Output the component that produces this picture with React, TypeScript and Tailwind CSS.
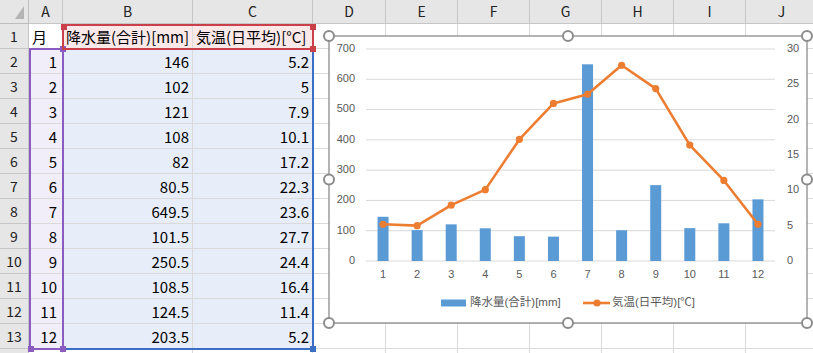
const cols = ["A", "B", "C", "D", "E", "F", "G", "H", "I", "J"];
const precip = [146, 102, 121, 108, 82, 80.5, 649.5, 101.5, 250.5, 108.5, 124.5, 203.5];
const temp = [5.2, 5, 7.9, 10.1, 17.2, 22.3, 23.6, 27.7, 24.4, 16.4, 11.4, 5.2];

const font = { fontFamily: '"Noto Sans CJK JP", "Noto Sans", sans-serif' };

const Chart = () => {
  const x0 = 37;
  const pw = 409;
  const step = pw / 12;
  const yZero = 225;
  const yTop = 13;
  const ph = yZero - yTop;
  const cx = (i: number) => x0 + step * (i + 0.5);
  const yP = (v: number) => yZero - (v * ph) / 700;
  const yT = (v: number) => yZero - (v * ph) / 30;
  const pts = temp.map((t, i) => `${cx(i)},${yT(t)}`).join(" ");
  const handles = [
    [0, 0],
    [239, 0],
    [478, 0],
    [0, 143.5],
    [478, 143.5],
    [0, 287],
    [239, 287],
    [478, 287],
  ];

  return (
    <svg
      className="absolute left-[329px] top-[36px] overflow-visible"
      width={478}
      height={287}
      style={{ fontFamily: '"Liberation Sans", "Noto Sans CJK JP", sans-serif' }}
    >
      <rect x={0} y={0} width={478} height={287} fill="#ffffff" stroke="#8c8c8c" strokeWidth={1.3} />
      {[0, 100, 200, 300, 400, 500, 600, 700].map((v) => (
        <g key={v}>
          <line x1={x0} x2={x0 + pw} y1={yP(v)} y2={yP(v)} stroke="#d9d9d9" strokeWidth={1} />
          <text x={26} y={yP(v)} fontSize={11} fill="#595959" textAnchor="end" dominantBaseline="middle">
            {v}
          </text>
        </g>
      ))}
      {[0, 5, 10, 15, 20, 25, 30].map((v) => (
        <text key={v} x={458} y={yT(v)} fontSize={11} fill="#595959" dominantBaseline="middle">
          {v}
        </text>
      ))}
      {precip.map((p, i) => (
        <rect key={i} x={cx(i) - 5.5} y={yP(p)} width={11} height={yZero - yP(p)} fill="#5b9bd5" />
      ))}
      <polyline points={pts} fill="none" stroke="#ed7d31" strokeWidth={2.6} strokeLinejoin="round" />
      {temp.map((t, i) => (
        <circle key={i} cx={cx(i)} cy={yT(t)} r={3.6} fill="#ed7d31" />
      ))}
      {precip.map((_, i) => (
        <text key={i} x={cx(i)} y={239} fontSize={11} fill="#595959" textAnchor="middle" dominantBaseline="middle">
          {i + 1}
        </text>
      ))}
      <rect x={112} y={263.5} width={25} height={7} fill="#5b9bd5" />
      <text x={141} y={267} fontSize={11.5} fill="#595959" dominantBaseline="middle">
        降水量(合計)[mm]
      </text>
      <line x1={254} x2={281} y1={267} y2={267} stroke="#ed7d31" strokeWidth={2.6} />
      <circle cx={268} cy={267} r={3.6} fill="#ed7d31" />
      <text x={283} y={267} fontSize={11.5} fill="#595959" dominantBaseline="middle">
        気温(日平均)[℃]
      </text>
      {handles.map(([hx, hy], i) => (
        <circle key={i} cx={hx} cy={hy} r={5} fill="#ffffff" stroke="#8c8c8c" strokeWidth={2} />
      ))}
    </svg>
  );
};

export default function App() {
  const rows = Array.from({ length: 14 }, (_, i) => i + 1);

  const cellText = (r: number, c: number) => {
    if (r === 1) return ["月", "降水量(合計)[mm]", "気温(日平均)[°C]"][c] ?? "";
    if (r <= 13) return [String(r - 1), String(precip[r - 2]), String(temp[r - 2])][c] ?? "";
    return "";
  };

  const cellBg = (r: number, c: number) => {
    if (r === 1 && (c === 1 || c === 2)) return "bg-[#fbe9ea]";
    if (r >= 2 && r <= 13 && c === 0) return "bg-[#f1eef9]";
    if (r >= 2 && r <= 13 && (c === 1 || c === 2)) return "bg-[#e8eef9]";
    return "bg-white";
  };

  return (
    <div className="relative h-[353px] w-[813px] overflow-hidden bg-white text-[15px] text-black" style={font}>
      <div className="grid grid-cols-[29px_34px_130px_120px_73px_72px_72px_72px_72px_72px_72px] grid-rows-[24px_repeat(14,25px)]">
        <div className="relative border-b border-r border-[#bdbdbd] bg-[#e6e6e6]">
          <div className="absolute bottom-[4px] right-[4px] h-0 w-0 border-b-[13px] border-l-[9px] border-b-[#b4b4b4] border-l-transparent" />
        </div>
        {cols.map((c) => (
          <div
            key={c}
            className="flex items-center justify-center border-b border-r border-[#c6c6c6] bg-[#e6e6e6] text-[14px] text-[#222]"
          >
            {c}
          </div>
        ))}
        {rows.map((r) => (
          <div key={r} className="contents">
            <div className="flex items-center justify-center border-b border-r border-[#c6c6c6] bg-[#e6e6e6] text-[14px] text-[#222]">
              {r <= 13 ? r : ""}
            </div>
            {cols.map((c, ci) => (
              <div
                key={c}
                className={`flex items-center overflow-visible whitespace-nowrap border-b border-r border-[#dadada] leading-none ${cellBg(r, ci)} ${
                  r === 1 ? "justify-start pl-[3px]" : ci === 0 ? "justify-end pr-[5px]" : "justify-end pr-[3px]"
                }`}
              >
                {cellText(r, ci)}
              </div>
            ))}
          </div>
        ))}
      </div>

      {/* formula range highlights (blue: B2:C13, purple: A2:A13, red: B1:C1) */}
      <div className="absolute left-[62px] top-[48px] h-[302px] w-[252px] border-2 border-[#3a6fc4]">
        <div className="absolute -bottom-[4px] -right-[4px] h-[6px] w-[6px] bg-[#3a6fc4]" />
      </div>
      <div className="absolute left-[29px] top-[48px] h-[302px] w-[35px] border-2 border-[#8a5cc0]">
        <div className="absolute -right-[4px] -top-[4px] h-[6px] w-[6px] bg-[#8a5cc0]" />
        <div className="absolute -bottom-[4px] -left-[3px] h-[6px] w-[6px] bg-[#8a5cc0]" />
        <div className="absolute -bottom-[4px] -right-[4px] h-[6px] w-[6px] bg-[#8a5cc0]" />
      </div>
      <div className="absolute left-[62px] top-[24px] h-[26px] w-[252px] border-2 border-[#c9404a]">
        <div className="absolute -left-[3px] -top-[2px] h-[6px] w-[6px] bg-[#c9404a]" />
        <div className="absolute -right-[4px] -top-[2px] h-[6px] w-[6px] bg-[#c9404a]" />
        <div className="absolute -bottom-[4px] -right-[4px] h-[6px] w-[6px] bg-[#c9404a]" />
      </div>

      <Chart />
    </div>
  );
}
